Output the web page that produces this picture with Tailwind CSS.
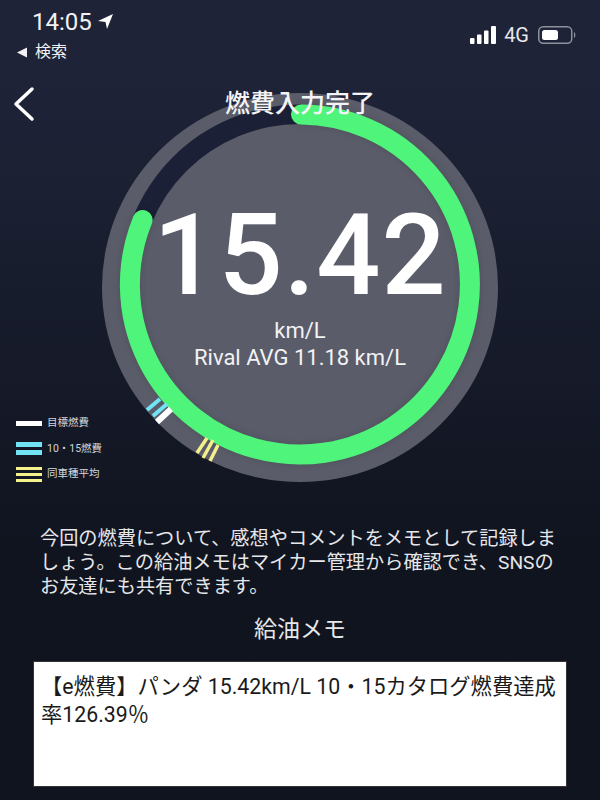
<!DOCTYPE html>
<html lang="ja">
<head>
  <meta charset="UTF-8">
  <meta name="viewport" content="width=device-width, initial-scale=1.0">
  <title>燃費入力完了</title>
  <script src="https://cdn.jsdelivr.net/npm/@tailwindcss/browser@4"></script>
</head>
<body class="m-0 bg-[#10141f]">
  <div class="relative w-[600px] h-[800px] overflow-hidden bg-gradient-to-b from-[#1e2338] from-10% to-[#10141f] to-70% text-white font-['Roboto','Noto_Sans_CJK_JP',sans-serif]">

    <!-- status bar -->
    <div class="flex justify-between px-4 h-[66px]">
      <div class="flex flex-col">
        <div class="flex items-center gap-[5px] pl-[16px] pt-[8px] h-[35px]">
          <span class="text-[24px] leading-[30px] text-[#f2f2f4]">14:05</span>
          <svg width="17" height="17" viewBox="0 0 17 17"><path d="M16 1 L1 8 L8.5 9 L10 16 Z" fill="#fff"/></svg>
        </div>
        <div class="flex items-center gap-[8px] pt-[7px] pl-[1px]">
          <svg width="10" height="11" viewBox="0 0 10 11"><path d="M10 0.5 V10.5 L0 5.5 Z" fill="#f2f2f4"/></svg>
          <span class="text-[16px] leading-[20px] text-[#f2f2f4]">検索</span>
        </div>
      </div>
      <div class="flex items-center gap-[7px] h-[70px] pr-[8px]">
        <svg width="27" height="18" viewBox="0 0 27 18">
          <rect x="0" y="12" width="4.5" height="6" rx="1" fill="#fff"/>
          <rect x="7" y="8.5" width="4.5" height="9.5" rx="1" fill="#fff"/>
          <rect x="14" y="4.5" width="4.5" height="13.5" rx="1" fill="#fff"/>
          <rect x="21" y="0" width="5" height="18" rx="1" fill="#fff"/>
        </svg>
        <span class="text-[20px] leading-[20px] text-[#e6e7ea]">4G</span>
        <svg width="38" height="20" viewBox="0 0 38 20" class="ml-[2px]">
          <rect x="0.75" y="1.75" width="33" height="16.5" rx="4.5" fill="none" stroke="#8e909b" stroke-width="1.5"/>
          <rect x="4" y="5" width="16" height="10" rx="2.5" fill="#fff"/>
          <path d="M36 7 C37.8 7.5 37.8 12.5 36 13 Z" fill="#8e909b"/>
        </svg>
      </div>
    </div>

    <!-- header -->
    <div class="relative h-[50px] z-10">
      <svg class="absolute left-[12px] top-[20px]" width="24" height="36" viewBox="0 0 24 36">
        <path d="M20 3 L4 18 L20 33" fill="none" stroke="#fff" stroke-width="3.5" stroke-linecap="round" stroke-linejoin="round"/>
      </svg>
      <h1 class="absolute inset-x-0 top-[22px] text-center text-[25px] leading-[32px] font-medium text-[#f4f4f6]">燃費入力完了</h1>
    </div>

    <!-- gauge -->
    <div class="absolute left-[90px] top-[80px] w-[420px] h-[420px]">
      <svg width="420" height="420" viewBox="90 80 420 420">
        <ellipse cx="300" cy="287.5" rx="198" ry="194.5" fill="#5a5d69"/>
        <circle cx="300" cy="284.5" r="180" fill="#1c2036"/>
        <circle cx="300" cy="284.5" r="160.5" fill="#5a5d69"/>
        <path d="M301 114.5 A170 170 0 1 1 142.6 220" fill="none" stroke="#5a5d69" stroke-width="25"/>
        <path class="drop-shadow-[0_0_3px_rgba(0,0,0,0.15)]" d="M301 114.5 A170 170 0 1 1 142.6 220" fill="none" stroke="#4ff47a" stroke-width="20" stroke-linecap="round"/>
        <g stroke="#fff" stroke-width="6">
          <line x1="157" y1="422" x2="171" y2="409"/>
        </g>
        <g stroke="#71e3f5" stroke-width="4">
          <line x1="147" y1="410" x2="160" y2="399"/>
          <line x1="153" y1="416" x2="167" y2="404"/>
        </g>
        <g stroke="#f4f08c" stroke-width="3.5">
          <line x1="197" y1="453" x2="207" y2="438"/>
          <line x1="203" y1="458" x2="213" y2="440"/>
          <line x1="210" y1="461" x2="218" y2="445"/>
        </g>
      </svg>
      <div class="absolute inset-x-0 top-[121px] text-center text-[113px] leading-[110px] tracking-[1px] font-medium text-white">15.42</div>
      <div class="absolute inset-x-0 top-[237px] text-center text-[22px] leading-[27px] text-[#f2f2f4]">km/L<br>Rival AVG 11.18 km/L</div>
    </div>

    <!-- legend -->
    <div class="absolute left-[16px] top-[417px] flex flex-col gap-[13.5px] text-[10.5px] text-[#d5d6da]">
      <div class="flex items-center gap-[5px] h-[12px]">
        <span class="block w-[26px] h-[5px] bg-white"></span>
        <span>目標燃費</span>
      </div>
      <div class="flex items-center gap-[5px] h-[12px]">
        <span class="flex flex-col gap-[3px] w-[26px]"><span class="block h-[5px] bg-[#71e3f5]"></span><span class="block h-[5px] bg-[#71e3f5]"></span></span>
        <span>10・15燃費</span>
      </div>
      <div class="flex items-center gap-[5px] h-[12px]">
        <span class="flex flex-col gap-[3px] w-[26px]"><span class="block h-[3px] bg-[#f4f08c]"></span><span class="block h-[3px] bg-[#f4f08c]"></span><span class="block h-[3px] bg-[#f4f08c]"></span></span>
        <span>同車種平均</span>
      </div>
    </div>

    <!-- memo -->
    <div class="absolute inset-x-0 top-[527px]">
      <p class="pl-[40px] pr-[30px] text-[19.2px] leading-[24px] text-[#e6e7ea]">今回の燃費について、感想やコメントをメモとして記録しましょう。この給油メモはマイカー管理から確認でき、SNSのお友達にも共有できます。</p>
      <h2 class="mt-[16px] text-center text-[23px] leading-[30px] text-[#e6e7ea]">給油メモ</h2>
      <div class="mt-[16px] mx-[33px] h-[126px] bg-white border border-[#333] pl-[7px] pr-[7px] pt-[11px] text-[#1a1a1a] text-[21.3px] leading-[28px]">【e燃費】パンダ 15.42km/L 10・15カタログ燃費達成率126.39％</div>
    </div>
  </div>
</body>
</html>
